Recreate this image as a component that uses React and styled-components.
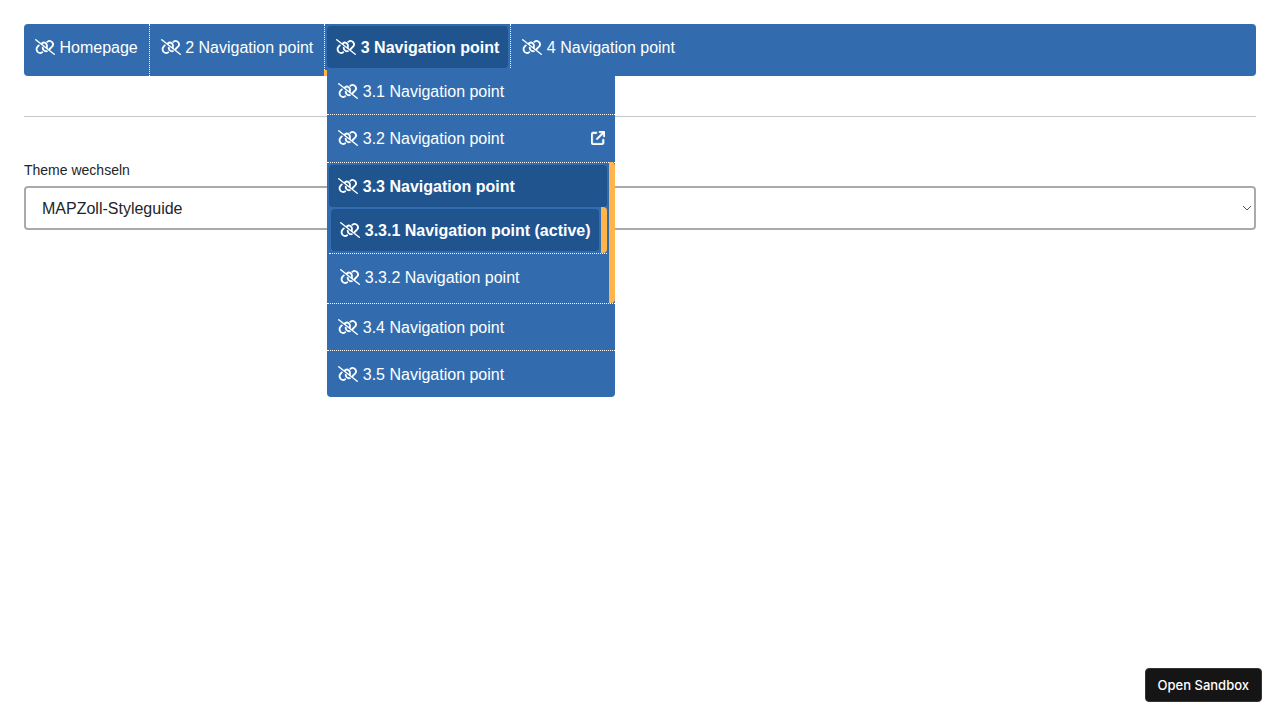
import React from "react";
import styled, { createGlobalStyle, css } from "styled-components";
import { FaArrowUpRightFromSquare } from "react-icons/fa6";

const color = {
  blue: "#326cae",
  dark: "#20548f",
  accent: "#ffb54c",
  text: "#212529",
};

const GlobalStyle = createGlobalStyle`
  *, *::before, *::after { box-sizing: border-box; }
  body {
    margin: 0;
    background: #fff;
    color: ${color.text};
    font: 16px/24px "Liberation Sans", Arial, sans-serif;
  }
`;

const Page = styled.div`
  min-height: 100vh;
  padding: 24px;
`;

const NavBar = styled.nav`
  background: ${color.blue};
  border-radius: 4px;
`;

const TopList = styled.ul`
  display: flex;
  margin: 0;
  padding: 0;
  list-style: none;
`;

const TopItem = styled.li`
  position: relative;
  padding: 2px 2px 8px;
  border-right: 1px dotted #fff;

  &:last-child {
    border-right: 0;
  }

  ${({ $active }) =>
    $active &&
    css`
      &::after {
        content: "";
        position: absolute;
        left: -1px;
        right: 0;
        bottom: 0;
        height: 6px;
        background: ${color.accent};
      }
    `}
`;

const NavLink = styled.a`
  display: flex;
  align-items: center;
  padding: 8px 9px;
  padding-right: ${({ $nested }) => ($nested ? "8px" : "9px")};
  border-radius: 4px;
  color: #fff;
  text-decoration: none;
  white-space: pre;
  background: ${({ $active }) => ($active ? color.dark : "transparent")};
  font-weight: ${({ $active }) => ($active ? 700 : 400)};

  svg {
    flex: none;
  }
`;

const LinkText = styled.span`
  padding-top: 2px;
`;

const UnlinkSvg = styled.svg`
  width: 20px;
  height: 16px;
  fill: none;
  stroke: currentColor;
  stroke-width: 60;
  stroke-linecap: round;
`;

const ExternalIcon = styled(FaArrowUpRightFromSquare)`
  width: 14px;
  height: 14px;
  margin-left: auto;
  stroke: #fff;
  stroke-width: 16px;
`;

const SubList = styled.ul`
  margin: 0;
  padding: 0;
  list-style: none;
`;

const NestedList = styled(SubList)`
  padding-bottom: 3px;
`;

const Dropdown = styled(SubList)`
  position: absolute;
  z-index: 2;
  top: 44px;
  left: 2px;
  background: ${color.blue};
  border-radius: 0 0 4px 4px;
`;

const SubItem = styled.li`
  position: relative;
  padding: 2px;
  padding-right: ${({ $active }) => ($active ? "8px" : "2px")};
  padding-bottom: ${({ $external, $branch }) => ($branch ? "0" : $external ? "3px" : "2px")};
  border-bottom: 1px dotted #fff;

  &:last-child {
    border-bottom: 0;
  }

  ${({ $active, $branch }) =>
    $active &&
    css`
      &::after {
        content: "";
        position: absolute;
        top: ${$branch ? "-1px" : "0"};
        right: 0;
        bottom: 0;
        width: 6px;
        border-radius: 0 4px 4px 0;
        background: ${color.accent};
      }
    `}
`;

const Divider = styled.hr`
  margin: 40px 0;
  border: 0;
  border-top: 1px solid #c8c8c8;
`;

const Label = styled.label`
  display: block;
  padding: 3px 0 6px;
  font-size: 14px;
  line-height: 20px;
`;

const SelectWrap = styled.div`
  position: relative;
  display: flex;
`;

const Select = styled.select`
  appearance: none;
  width: 100%;
  height: 44px;
  padding: 2px 32px 0 16px;
  border: 2px solid #aaa;
  border-radius: 4px;
  background: #fff;
  color: ${color.text};
  font: inherit;
`;

const Chevron = styled.svg`
  position: absolute;
  top: 17px;
  right: 4px;
  pointer-events: none;
`;

const SandboxButton = styled.button`
  position: fixed;
  right: 18px;
  bottom: 18px;
  height: 34px;
  padding: 0 12px;
  border: 1px solid #343434;
  border-radius: 4px;
  background: #151515;
  color: #fff;
  font: 500 13px/20px Inter, sans-serif;
`;

const items = [
  { label: "Homepage" },
  { label: "2 Navigation point" },
  {
    label: "3 Navigation point",
    active: true,
    children: [
      { label: "3.1 Navigation point" },
      { label: "3.2 Navigation point", external: true },
      {
        label: "3.3 Navigation point",
        active: true,
        children: [
          { label: "3.3.1 Navigation point (active)", active: true },
          { label: "3.3.2 Navigation point" },
        ],
      },
      { label: "3.4 Navigation point" },
      { label: "3.5 Navigation point" },
    ],
  },
  { label: "4 Navigation point" },
];

function UnlinkIcon() {
  return (
    <UnlinkSvg viewBox="0 0 640 512" aria-hidden="true">
      <path strokeWidth="46" d="M24 24 L616 488" />
      <path d="M122 204 L84 244 C34 294 40 376 92 420 C136 454 190 452 232 424" />
      <path d="M246 280 C246 322 270 366 310 384 C334 394 358 394 380 388" />
      <path d="M218 142 C262 106 326 112 362 154 C390 190 396 232 380 274" />
      <path d="M394 92 C440 54 506 56 546 100 C586 146 584 206 544 246 L470 320" />
    </UnlinkSvg>
  );
}

function Entry({ item, nested }) {
  return (
    <NavLink href="#" $active={item.active} $nested={nested}>
      <UnlinkIcon />
      <LinkText> {item.label}</LinkText>
      {item.external && <ExternalIcon aria-hidden="true" />}
    </NavLink>
  );
}

function SubEntry({ item }) {
  return (
    <SubItem $active={item.active} $external={item.external} $branch={!!item.children}>
      <Entry item={item} nested />
      {item.children && (
        <NestedList>
          {item.children.map((child) => (
            <SubEntry key={child.label} item={child} />
          ))}
        </NestedList>
      )}
    </SubItem>
  );
}

export default function App() {
  return (
    <>
      <GlobalStyle />
      <Page>
        <NavBar>
          <TopList>
            {items.map((item) => (
              <TopItem key={item.label} $active={item.active}>
                <Entry item={item} />
                {item.children && (
                  <Dropdown>
                    {item.children.map((child) => (
                      <SubEntry key={child.label} item={child} />
                    ))}
                  </Dropdown>
                )}
              </TopItem>
            ))}
          </TopList>
        </NavBar>
        <Divider />
        <Label htmlFor="theme">Theme wechseln</Label>
        <SelectWrap>
          <Select id="theme">
            <option>MAPZoll-Styleguide</option>
          </Select>
          <Chevron width="10" height="10" viewBox="0 0 10 10" fill="none" stroke="#555" aria-hidden="true">
            <path d="M1 3 L5 7 L9 3" />
          </Chevron>
        </SelectWrap>
      </Page>
      <SandboxButton type="button">Open Sandbox</SandboxButton>
    </>
  );
}
